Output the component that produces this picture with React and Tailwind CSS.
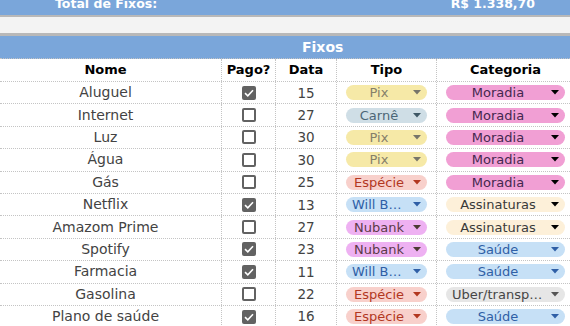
import React from 'react';

const rows = [
  { nome: 'Aluguel', pago: true, data: '15', tipo: 'Pix', cat: 'Moradia' },
  { nome: 'Internet', pago: false, data: '27', tipo: 'Carnê', cat: 'Moradia' },
  { nome: 'Luz', pago: false, data: '30', tipo: 'Pix', cat: 'Moradia' },
  { nome: 'Água', pago: false, data: '30', tipo: 'Pix', cat: 'Moradia' },
  { nome: 'Gás', pago: false, data: '25', tipo: 'Espécie', cat: 'Moradia' },
  { nome: 'Netflix', pago: true, data: '13', tipo: 'Will Bank', cat: 'Assinaturas' },
  { nome: 'Amazom Prime', pago: false, data: '27', tipo: 'Nubank', cat: 'Assinaturas' },
  { nome: 'Spotify', pago: true, data: '23', tipo: 'Nubank', cat: 'Saúde' },
  { nome: 'Farmacia', pago: true, data: '11', tipo: 'Will Bank', cat: 'Saúde' },
  { nome: 'Gasolina', pago: false, data: '22', tipo: 'Espécie', cat: 'Uber/transporte' },
  { nome: 'Plano de saúde', pago: true, data: '16', tipo: 'Espécie', cat: 'Saúde' },
];

const chip = {
  Pix: { cls: 'bg-[#f6e9a7] text-[#85806a]', arrow: '#77756a' },
  'Carnê': { cls: 'bg-[#cfdee6] text-[#4c6676]', arrow: '#3e5765' },
  'Espécie': { cls: 'bg-[#f8d0cb] text-[#b2371f]', arrow: '#b2371f' },
  'Will Bank': { cls: 'bg-[#c6e0f6] text-[#2f5fa6]', arrow: '#2f5fa6' },
  Nubank: { cls: 'bg-[#eeb1f2] text-[#5b3a48]', arrow: '#4b3a32' },
  Moradia: { cls: 'bg-[#f19fd4] text-[#44284f]', arrow: '#000000' },
  Assinaturas: { cls: 'bg-[#fdf0d9] text-[#3a3a3a]', arrow: '#000000' },
  'Saúde': { cls: 'bg-[#c6e0f6] text-[#2f5fa6]', arrow: '#2f5fa6' },
  'Uber/transporte': { cls: 'bg-[#e6e6e6] text-[#454545]', arrow: '#555555' },
};

const Arrow = ({ color }) => (
  <svg width="8" height="5" viewBox="0 0 8 5" className="shrink-0">
    <polygon points="0,0 8,0 4,4.5" fill={color} />
  </svg>
);

const Chip = ({ label }) => {
  const s = chip[label];
  return (
    <div className={`h-[15px] w-full rounded-full flex items-center pl-[6px] pr-[6px] gap-[7px] ${s.cls}`}>
      <span className="flex-1 min-w-0 truncate text-center text-[13px] leading-[15px]">{label}</span>
      <Arrow color={s.arrow} />
    </div>
  );
};

const Check = ({ on }) =>
  on ? (
    <div className="w-[14px] h-[14px] rounded-[2px] bg-[#626262] flex items-center justify-center">
      <svg width="10" height="8" viewBox="0 0 10 8">
        <path d="M1 4.2 L3.8 6.8 L9 1.2" fill="none" stroke="#ffffff" strokeWidth="1.6" />
      </svg>
    </div>
  ) : (
    <div className="w-[14px] h-[14px] rounded-[2px] border-2 border-[#626262] bg-white" />
  );

const cell = 'border-r border-dotted border-[#c4c4c4] flex items-center justify-center';

export default function App() {
  return (
    <div className="w-[570px] h-[326px] overflow-hidden bg-white font-['DejaVu_Sans',sans-serif]">
      <div className="w-[574px]">
        <div className="h-[15px] bg-[#7aa6da] overflow-hidden flex items-start justify-between pl-[55px] pr-[39px] text-white font-bold text-[12.5px] leading-none">
          <span className="-mt-[2px]">Total de Fixos:</span>
          <span className="-mt-[2px]">R$ 1.338,70</span>
        </div>
        <div className="h-[21px] bg-[#f3f3f3] border-t-2 border-b-[3px] border-[#b8b8b8]" />
        <div className="h-[23px] bg-[#7aa6da] border-b border-dotted border-[#c4c4c4] flex items-center pl-[302px] text-white font-bold text-[14px]">
          Fixos
        </div>
        <div className="grid grid-cols-[222px_54px_61px_100px_137px] h-[23px] border-b border-dotted border-[#c4c4c4] text-black font-bold text-[13px]">
          <div className={`${cell} pr-[10px]`}>Nome</div>
          <div className={cell}>Pago?</div>
          <div className={cell}>Data</div>
          <div className={cell}>Tipo</div>
          <div className="flex items-center justify-center">Categoria</div>
        </div>
        {rows.map((r) => (
          <div
            key={r.nome}
            className="grid grid-cols-[222px_54px_61px_100px_137px] h-[22.4px] border-b border-dotted border-[#c4c4c4] text-[#434343] text-[14px]"
          >
            <div className={`${cell} pr-[10px]`}>{r.nome}</div>
            <div className={cell}>
              <Check on={r.pago} />
            </div>
            <div className={`${cell} text-[13.5px]`}>{r.data}</div>
            <div className={`${cell} px-[9px]`}>
              <Chip label={r.tipo} />
            </div>
            <div className="flex items-center px-[9px]">
              <Chip label={r.cat} />
            </div>
          </div>
        ))}
      </div>
    </div>
  );
}
